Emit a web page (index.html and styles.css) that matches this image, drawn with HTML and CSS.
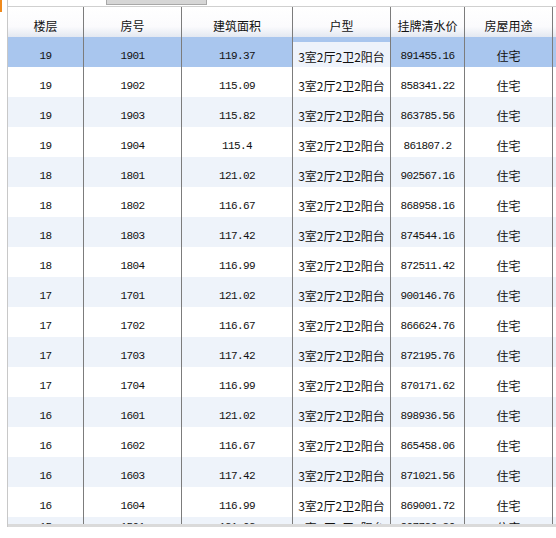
FILE: index.html
```html
<!DOCTYPE html>
<html lang="zh">
<head>
<meta charset="utf-8">
<link rel="stylesheet" href="styles.css">
</head>
<body>
<div class="marker"></div>
<div class="page">
  <div class="panel">
    <div class="topstrip"><div class="tabbtn"></div></div>
    <div class="grid">
      <div class="row head">
        <div class="c">楼层</div><div class="c">房号</div><div class="c">建筑面积</div><div class="c">户型</div><div class="c">挂牌清水价</div><div class="c">房屋用途</div><div class="c last"></div>
      </div>
      <div class="body">
        <div class="row sel"><div class="c n">19</div><div class="c n">1901</div><div class="c n">119.37</div><div class="c t"><span class="edit">3室2厅2卫2阳台</span></div><div class="c n">891455.16</div><div class="c t">住宅</div><div class="c last"></div></div>
        <div class="row"><div class="c n">19</div><div class="c n">1902</div><div class="c n">115.09</div><div class="c t">3室2厅2卫2阳台</div><div class="c n">858341.22</div><div class="c t">住宅</div><div class="c last"></div></div>
        <div class="row alt"><div class="c n">19</div><div class="c n">1903</div><div class="c n">115.82</div><div class="c t">3室2厅2卫2阳台</div><div class="c n">863785.56</div><div class="c t">住宅</div><div class="c last"></div></div>
        <div class="row"><div class="c n">19</div><div class="c n">1904</div><div class="c n">115.4</div><div class="c t">3室2厅2卫2阳台</div><div class="c n">861807.2</div><div class="c t">住宅</div><div class="c last"></div></div>
        <div class="row alt"><div class="c n">18</div><div class="c n">1801</div><div class="c n">121.02</div><div class="c t">3室2厅2卫2阳台</div><div class="c n">902567.16</div><div class="c t">住宅</div><div class="c last"></div></div>
        <div class="row"><div class="c n">18</div><div class="c n">1802</div><div class="c n">116.67</div><div class="c t">3室2厅2卫2阳台</div><div class="c n">868958.16</div><div class="c t">住宅</div><div class="c last"></div></div>
        <div class="row alt"><div class="c n">18</div><div class="c n">1803</div><div class="c n">117.42</div><div class="c t">3室2厅2卫2阳台</div><div class="c n">874544.16</div><div class="c t">住宅</div><div class="c last"></div></div>
        <div class="row"><div class="c n">18</div><div class="c n">1804</div><div class="c n">116.99</div><div class="c t">3室2厅2卫2阳台</div><div class="c n">872511.42</div><div class="c t">住宅</div><div class="c last"></div></div>
        <div class="row alt"><div class="c n">17</div><div class="c n">1701</div><div class="c n">121.02</div><div class="c t">3室2厅2卫2阳台</div><div class="c n">900146.76</div><div class="c t">住宅</div><div class="c last"></div></div>
        <div class="row"><div class="c n">17</div><div class="c n">1702</div><div class="c n">116.67</div><div class="c t">3室2厅2卫2阳台</div><div class="c n">866624.76</div><div class="c t">住宅</div><div class="c last"></div></div>
        <div class="row alt"><div class="c n">17</div><div class="c n">1703</div><div class="c n">117.42</div><div class="c t">3室2厅2卫2阳台</div><div class="c n">872195.76</div><div class="c t">住宅</div><div class="c last"></div></div>
        <div class="row"><div class="c n">17</div><div class="c n">1704</div><div class="c n">116.99</div><div class="c t">3室2厅2卫2阳台</div><div class="c n">870171.62</div><div class="c t">住宅</div><div class="c last"></div></div>
        <div class="row alt"><div class="c n">16</div><div class="c n">1601</div><div class="c n">121.02</div><div class="c t">3室2厅2卫2阳台</div><div class="c n">898936.56</div><div class="c t">住宅</div><div class="c last"></div></div>
        <div class="row"><div class="c n">16</div><div class="c n">1602</div><div class="c n">116.67</div><div class="c t">3室2厅2卫2阳台</div><div class="c n">865458.06</div><div class="c t">住宅</div><div class="c last"></div></div>
        <div class="row alt"><div class="c n">16</div><div class="c n">1603</div><div class="c n">117.42</div><div class="c t">3室2厅2卫2阳台</div><div class="c n">871021.56</div><div class="c t">住宅</div><div class="c last"></div></div>
        <div class="row"><div class="c n">16</div><div class="c n">1604</div><div class="c n">116.99</div><div class="c t">3室2厅2卫2阳台</div><div class="c n">869001.72</div><div class="c t">住宅</div><div class="c last"></div></div>
        <div class="row alt partial"><div class="c n">15</div><div class="c n">1501</div><div class="c n">121.02</div><div class="c t">3室2厅2卫2阳台</div><div class="c n">897726.36</div><div class="c t">住宅</div><div class="c last"></div></div>
      </div>
    </div>
  </div>
</div>
</body>
</html>
```

FILE: styles.css
```css
html, body {
  margin: 0;
  padding: 0;
  background: #ffffff;
}
body {
  width: 556px;
  height: 538px;
  overflow: hidden;
  position: relative;
  font-family: "Noto Sans CJK SC", "Liberation Sans", sans-serif;
  font-size: 12px;
  color: #111;
}
.marker {
  position: absolute;
  left: 0;
  top: 0;
  width: 2px;
  height: 12px;
  background: #f08a1c;
}
.page {
  padding-left: 7px;
}
.panel {
  border-left: 1px solid #c8c8c8;
  height: 527px;
  box-sizing: border-box;
  display: flex;
  flex-direction: column;
}
.topstrip {
  height: 6px;
  border-bottom: 1px solid #d0d0d0;
  box-sizing: content-box;
}
.tabbtn {
  margin-left: 98px;
  width: 99px;
  height: 4px;
  background: #d6d6d6;
  border: 1px solid #a8a8a8;
  border-top: none;
}
.grid {
  flex: 1;
  overflow: hidden;
  display: flex;
  flex-direction: column;
  border-bottom: 3px solid #dadada;
}
.row {
  display: grid;
  grid-template-columns: 76px 98px 111px 98px 74px 88px 1fr;
  height: 30px;
  flex: none;
}
.c {
  border-right: 1px solid #7c7c7c;
  box-sizing: border-box;
  text-align: center;
  height: 30px;
  line-height: 30px;
  padding-top: 4px;
  white-space: nowrap;
  overflow: hidden;
}
.c.last {
  border-right: none;
}
.head {
  background: linear-gradient(#ffffff 0%, #fbfbfd 65%, #e3e8f1 100%);
}
.body {
  flex: 1;
  overflow: hidden;
}
.n {
  font-family: "Liberation Mono", monospace;
  font-size: 11px;
  letter-spacing: -0.6px;
}
.t {
  font-size: 12px;
}
.alt {
  background: #eef3fa;
}
.sel {
  background: #a9c6ee;
}
.sel .t:nth-child(4) {
  padding-top: 5px;
}
.edit {
  display: block;
  height: 25px;
  line-height: 29px;
  background: #eef3fb;
}
.partial .c {
  padding-top: 0;
  line-height: 21px;
}
```
